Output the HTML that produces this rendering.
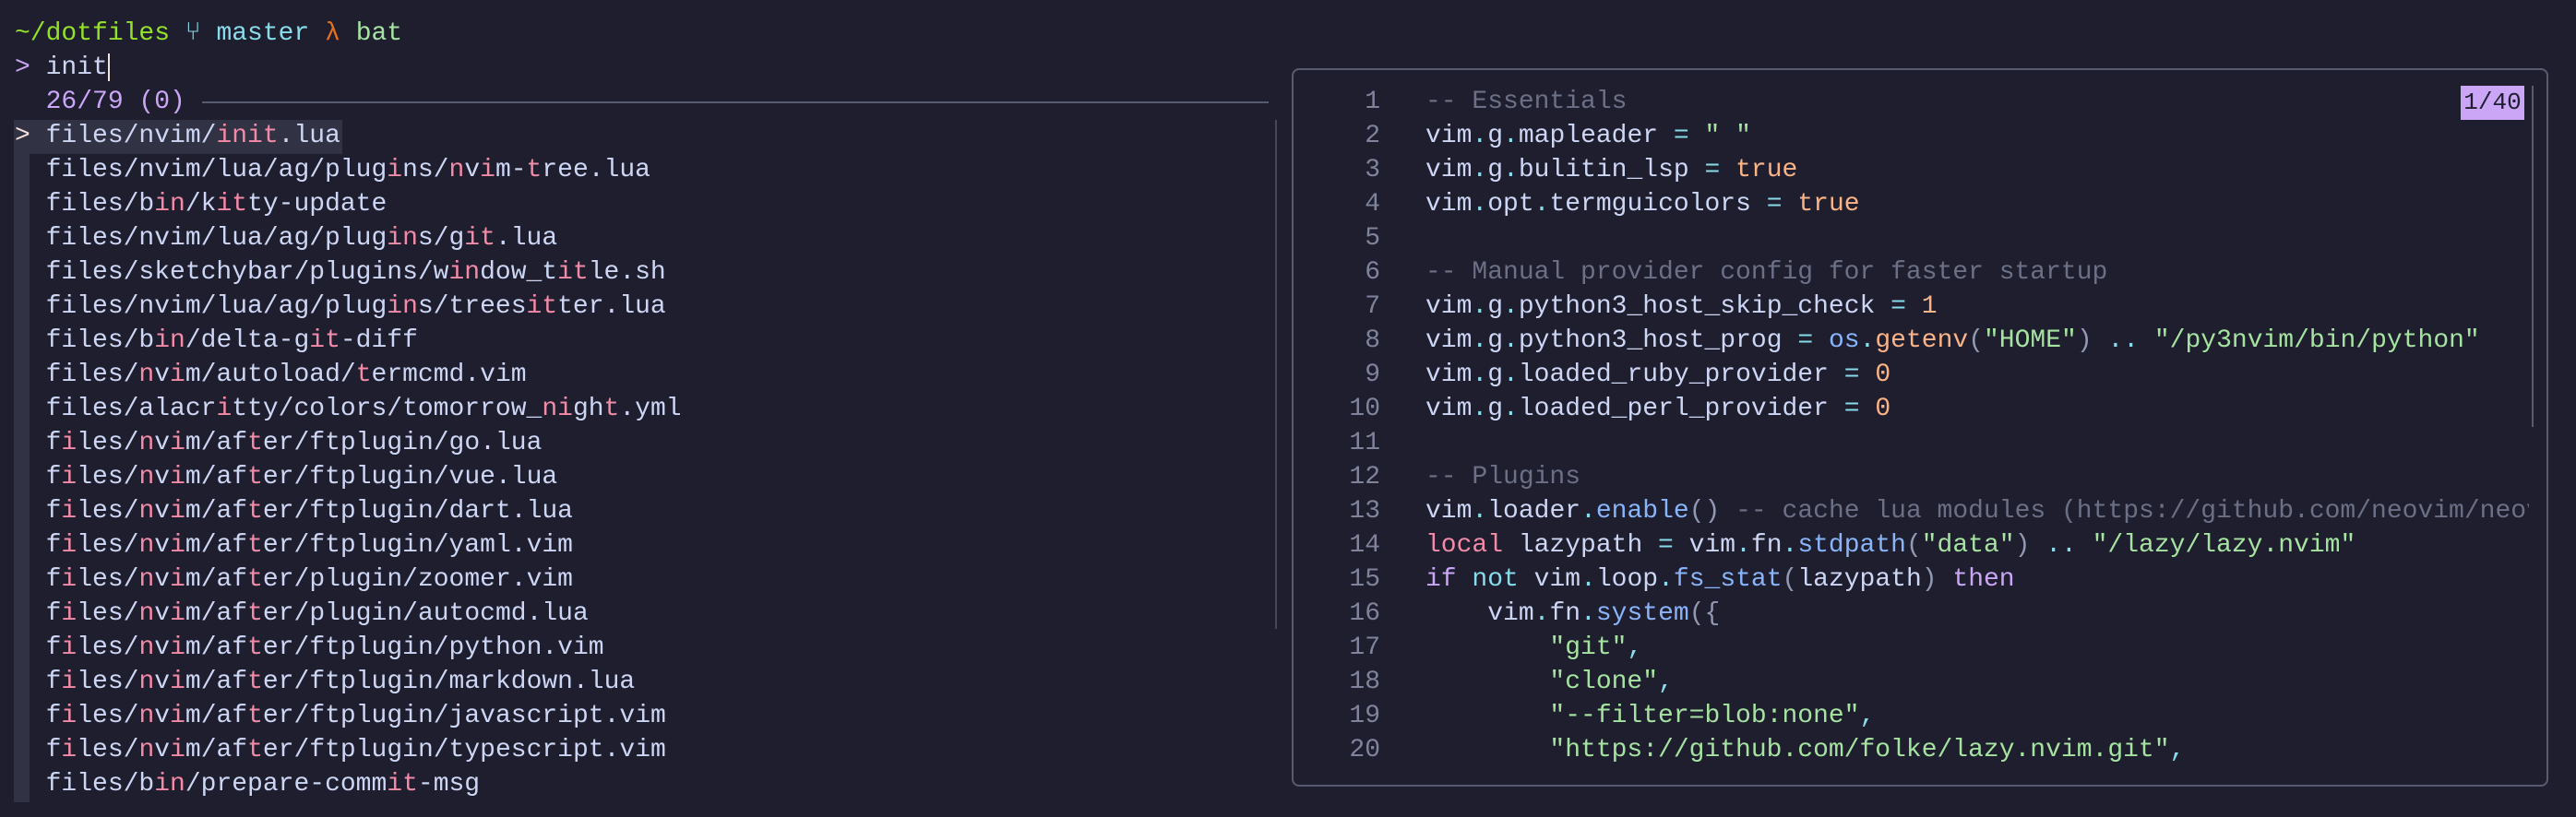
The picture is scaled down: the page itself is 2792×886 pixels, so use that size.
<!DOCTYPE html>
<html><head><meta charset="utf-8"><style>
html,body{margin:0;padding:0;background:#1e1e2e;width:2792px;height:886px;overflow:hidden}
body{position:relative;font-family:"Liberation Mono",monospace;font-size:28px;color:#cdd6f4}
.l{position:absolute;height:37px;line-height:37px;white-space:pre}
.m{color:#f38ba8}
.c{color:#6c7086}.o{color:#89dceb}.t{color:#fab387}.s{color:#a6e3a1}.k{color:#cba6f7}.f{color:#89b4fa}.p{color:#9399b2}.r{color:#f38ba8}
.n{position:absolute;left:1420px;width:76px;text-align:right;color:#7f849c;height:37px;line-height:37px}
</style></head><body>
<div class="l" style="left:16px;top:18px"><span style="color:#94e02a">~/dotfiles</span> <span style="color:#89dceb">⑂ master</span> <span style="color:#e8701a">λ</span> <span style="color:#a6e3a1">bat</span></div>
<div class="l" style="left:16px;top:55px"><span class="k">&gt;</span> init<span style="display:inline-block;width:2px;height:30px;background:#f5e0dc;vertical-align:middle"></span></div>
<div class="l" style="left:16px;top:92px"><span class="k">  26/79 (0)</span></div>
<div style="position:absolute;left:219px;top:110px;width:1156px;height:2px;background:#585b70"></div>
<div style="position:absolute;left:15px;top:130px;width:356px;height:37px;background:#313244"></div>
<div style="position:absolute;left:15px;top:167px;width:17px;height:703px;background:#313244"></div>
<div style="position:absolute;left:1382px;top:130px;width:2px;height:552px;background:#45475a"></div>
<div class="l" style="left:16px;top:129px"><span style="color:#f5e0dc">&gt;</span> files/nvim/<span class="m">init</span>.lua</div>
<div class="l" style="left:16px;top:166px">  files/nvim/lua/ag/plug<span class="m">i</span>ns/<span class="m">n</span>v<span class="m">i</span>m-<span class="m">t</span>ree.lua</div>
<div class="l" style="left:16px;top:203px">  files/b<span class="m">in</span>/k<span class="m">it</span>ty-update</div>
<div class="l" style="left:16px;top:240px">  files/nvim/lua/ag/plug<span class="m">in</span>s/g<span class="m">it</span>.lua</div>
<div class="l" style="left:16px;top:277px">  files/sketchybar/plugins/w<span class="m">in</span>dow_t<span class="m">it</span>le.sh</div>
<div class="l" style="left:16px;top:314px">  files/nvim/lua/ag/plug<span class="m">in</span>s/trees<span class="m">it</span>ter.lua</div>
<div class="l" style="left:16px;top:351px">  files/b<span class="m">in</span>/delta-g<span class="m">it</span>-diff</div>
<div class="l" style="left:16px;top:388px">  files/<span class="m">n</span>v<span class="m">i</span>m/autoload/<span class="m">t</span>ermcmd.vim</div>
<div class="l" style="left:16px;top:425px">  files/alacr<span class="m">i</span>tty/colors/tomorrow_<span class="m">n</span><span class="m">i</span>gh<span class="m">t</span>.yml</div>
<div class="l" style="left:16px;top:462px">  f<span class="m">i</span>les/<span class="m">n</span>v<span class="m">i</span>m/af<span class="m">t</span>er/ftplugin/go.lua</div>
<div class="l" style="left:16px;top:499px">  f<span class="m">i</span>les/<span class="m">n</span>v<span class="m">i</span>m/af<span class="m">t</span>er/ftplugin/vue.lua</div>
<div class="l" style="left:16px;top:536px">  f<span class="m">i</span>les/<span class="m">n</span>v<span class="m">i</span>m/af<span class="m">t</span>er/ftplugin/dart.lua</div>
<div class="l" style="left:16px;top:573px">  f<span class="m">i</span>les/<span class="m">n</span>v<span class="m">i</span>m/af<span class="m">t</span>er/ftplugin/yaml.vim</div>
<div class="l" style="left:16px;top:610px">  f<span class="m">i</span>les/<span class="m">n</span>v<span class="m">i</span>m/af<span class="m">t</span>er/plugin/zoomer.vim</div>
<div class="l" style="left:16px;top:647px">  f<span class="m">i</span>les/<span class="m">n</span>v<span class="m">i</span>m/af<span class="m">t</span>er/plugin/autocmd.lua</div>
<div class="l" style="left:16px;top:684px">  f<span class="m">i</span>les/<span class="m">n</span>v<span class="m">i</span>m/af<span class="m">t</span>er/ftplugin/python.vim</div>
<div class="l" style="left:16px;top:721px">  f<span class="m">i</span>les/<span class="m">n</span>v<span class="m">i</span>m/af<span class="m">t</span>er/ftplugin/markdown.lua</div>
<div class="l" style="left:16px;top:758px">  f<span class="m">i</span>les/<span class="m">n</span>v<span class="m">i</span>m/af<span class="m">t</span>er/ftplugin/javascript.vim</div>
<div class="l" style="left:16px;top:795px">  f<span class="m">i</span>les/<span class="m">n</span>v<span class="m">i</span>m/af<span class="m">t</span>er/ftplugin/typescript.vim</div>
<div class="l" style="left:16px;top:832px">  files/b<span class="m">in</span>/prepare-comm<span class="m">it</span>-msg</div>

<div style="position:absolute;left:1400px;top:74px;width:1358px;height:775px;border:2px solid #585b70;border-radius:8px;box-sizing:content-box;overflow:hidden">
</div>
<div style="position:absolute;left:2744px;top:93px;width:2px;height:370px;background:#585b70"></div>
<div style="position:absolute;left:2667px;top:93px;width:69px;height:37px;background:#cba6f7;color:#1e1e2e;line-height:37px;text-align:center;font-size:26px">1/40</div>

<div class="n" style="top:92px">1</div><div class="l" style="left:1545px;top:92px"><span class="c">-- Essentials</span></div>
<div class="n" style="top:129px">2</div><div class="l" style="left:1545px;top:129px">vim<span class="o">.</span>g<span class="o">.</span>mapleader <span class="o">=</span> <span class="s">" "</span></div>
<div class="n" style="top:166px">3</div><div class="l" style="left:1545px;top:166px">vim<span class="o">.</span>g<span class="o">.</span>bulitin_lsp <span class="o">=</span> <span class="t">true</span></div>
<div class="n" style="top:203px">4</div><div class="l" style="left:1545px;top:203px">vim<span class="o">.</span>opt<span class="o">.</span>termguicolors <span class="o">=</span> <span class="t">true</span></div>
<div class="n" style="top:240px">5</div>
<div class="n" style="top:277px">6</div><div class="l" style="left:1545px;top:277px"><span class="c">-- Manual provider config for faster startup</span></div>
<div class="n" style="top:314px">7</div><div class="l" style="left:1545px;top:314px">vim<span class="o">.</span>g<span class="o">.</span>python3_host_skip_check <span class="o">=</span> <span class="t">1</span></div>
<div class="n" style="top:351px">8</div><div class="l" style="left:1545px;top:351px">vim<span class="o">.</span>g<span class="o">.</span>python3_host_prog <span class="o">=</span> <span class="f">os</span><span class="o">.</span><span class="t">getenv</span><span class="p">(</span><span class="s">"HOME"</span><span class="p">)</span> <span class="o">..</span> <span class="s">"/py3nvim/bin/python"</span></div>
<div class="n" style="top:388px">9</div><div class="l" style="left:1545px;top:388px">vim<span class="o">.</span>g<span class="o">.</span>loaded_ruby_provider <span class="o">=</span> <span class="t">0</span></div>
<div class="n" style="top:425px">10</div><div class="l" style="left:1545px;top:425px">vim<span class="o">.</span>g<span class="o">.</span>loaded_perl_provider <span class="o">=</span> <span class="t">0</span></div>
<div class="n" style="top:462px">11</div>
<div class="n" style="top:499px">12</div><div class="l" style="left:1545px;top:499px"><span class="c">-- Plugins</span></div>
<div class="n" style="top:536px">13</div><div class="l" style="left:1545px;top:536px;width:1196px;overflow:hidden">vim<span class="o">.</span>loader<span class="o">.</span><span class="f">enable</span><span class="p">()</span> <span class="c">-- cache lua modules (https://github.com/neovim/neovim</span></div>
<div class="n" style="top:573px">14</div><div class="l" style="left:1545px;top:573px"><span class="r">local</span> lazypath <span class="o">=</span> vim<span class="o">.</span>fn<span class="o">.</span><span class="f">stdpath</span><span class="p">(</span><span class="s">"data"</span><span class="p">)</span> <span class="o">..</span> <span class="s">"/lazy/lazy.nvim"</span></div>
<div class="n" style="top:610px">15</div><div class="l" style="left:1545px;top:610px"><span class="k">if</span> <span class="o">not</span> vim<span class="o">.</span>loop<span class="o">.</span><span class="f">fs_stat</span><span class="p">(</span>lazypath<span class="p">)</span> <span class="k">then</span></div>
<div class="n" style="top:647px">16</div><div class="l" style="left:1545px;top:647px">    vim<span class="o">.</span>fn<span class="o">.</span><span class="f">system</span><span class="p">({</span></div>
<div class="n" style="top:684px">17</div><div class="l" style="left:1545px;top:684px">        <span class="s">"git"</span><span class="o">,</span></div>
<div class="n" style="top:721px">18</div><div class="l" style="left:1545px;top:721px">        <span class="s">"clone"</span><span class="o">,</span></div>
<div class="n" style="top:758px">19</div><div class="l" style="left:1545px;top:758px">        <span class="s">"--filter=blob:none"</span><span class="o">,</span></div>
<div class="n" style="top:795px">20</div><div class="l" style="left:1545px;top:795px">        <span class="s">"https://github.com/folke/lazy.nvim.git"</span><span class="o">,</span></div>
</body></html>
